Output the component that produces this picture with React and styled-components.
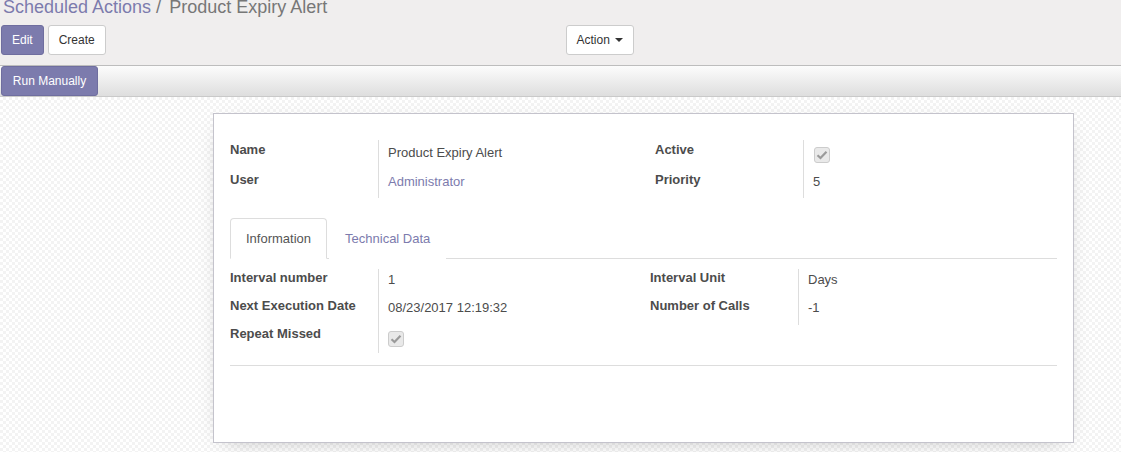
import React from 'react';
import styled, { createGlobalStyle } from 'styled-components';

const GlobalStyle = createGlobalStyle`
  html, body {
    margin: 0;
    padding: 0;
    height: 100%;
    overflow: hidden;
  }
  body {
    font-family: 'Liberation Sans', Arial, sans-serif;
    font-size: 13px;
    color: #4c4c4c;
  }
  #root {
    height: 100%;
  }
`;

const Page = styled.div`
  display: flex;
  flex-direction: column;
  height: 452px;
`;

const ControlPanel = styled.div`
  background: #f0eeee;
  border-bottom: 1px solid #bdbdbd;
  padding: 0 1px 10px;
`;

const Breadcrumb = styled.div`
  font-size: 18px;
  line-height: 18px;
  margin: -2px 0 0 2px;
  height: 16px;
  overflow: visible;
  white-space: nowrap;
`;

const Crumb = styled.span`
  color: #7c7bad;
`;

const CrumbSep = styled.span`
  color: #777;
  margin: 0 8px 0 5px;
`;

const Current = styled.span`
  color: #777;
`;

const CpRow = styled.div`
  display: grid;
  grid-template-columns: 1fr 1fr;
  margin-top: 11px;
`;

const ButtonGroup = styled.div`
  display: flex;
  gap: 4px;
  padding-left: ${p => p.$offset || 0}px;
`;

const Button = styled.button`
  box-sizing: border-box;
  height: 30px;
  min-width: ${p => p.$min || 0}px;
  justify-content: center;
  padding: 0 10px;
  font-family: 'Liberation Sans', Arial, sans-serif;
  font-size: 12px;
  border-radius: 3px;
  display: inline-flex;
  align-items: center;
  gap: 5px;
  cursor: pointer;
  border: 1px solid ${p => (p.$primary ? '#6f6e9f' : '#cccccc')};
  background: ${p => (p.$primary ? '#7c7bad' : '#ffffff')};
  color: ${p => (p.$primary ? '#ffffff' : '#333333')};
`;

const Caret = styled.span`
  width: 0;
  height: 0;
  border-left: 4px solid transparent;
  border-right: 4px solid transparent;
  border-top: 4px solid #333;
`;

const StatusBar = styled.div`
  display: flex;
  padding-left: 1px;
  background: linear-gradient(to bottom, #fcfcfc, #dedede);
  border-bottom: 1px solid #c9c9c9;
`;

const SheetBg = styled.div`
  flex: 1;
  padding: 16px 47px 10px 213px;
  background-color: #ffffff;
  background-image: repeating-conic-gradient(#f3f3f3 0% 25%, #ffffff 0% 50%);
  background-size: 6px 6px;
`;

const Sheet = styled.div`
  box-sizing: border-box;
  height: 330px;
  background: #ffffff;
  border: 1px solid #c4c3cc;
  box-shadow: 0 6px 22px -12px rgba(0, 0, 0, 0.35);
  padding: 26px 16px 0;
`;

const Groups = styled.div`
  display: flex;
`;

const Group = styled.div`
  width: ${p => p.$width}px;
  display: grid;
  grid-template-columns: 149px 1fr;
  grid-auto-rows: ${p => p.$row}px;
  padding-bottom: ${p => p.$bottom || 0}px;
`;

const Label = styled.div`
  font-weight: bold;
  color: #4c4c4c;
  line-height: 18px;
  padding-top: ${p => p.$top || 0}px;
  border-right: 1px solid #dddddd;
  white-space: nowrap;
`;

const Value = styled.div`
  line-height: 18px;
  padding: ${p => p.$top || 0}px 0 0 9px;
  color: ${p => (p.$link ? '#7c7bad' : '#4c4c4c')};
`;

const Check = styled.div`
  box-sizing: border-box;
  width: 16px;
  height: 16px;
  margin: ${p => p.$top}px 0 0 ${p => p.$left}px;
  border: 1px solid #cccccc;
  border-radius: 3px;
  background: #e9e9e9;
  display: flex;
  align-items: center;
  justify-content: center;
`;

const Tabs = styled.div`
  display: flex;
  margin-top: 20px;
  border-bottom: 1px solid #dddddd;
`;

const Tab = styled.div`
  line-height: 20px;
  padding: 10px 15px 9px;
  margin: 0 2px -1px 0;
  border: 1px solid ${p => (p.$active ? '#dddddd' : 'transparent')};
  border-bottom-color: ${p => (p.$active ? '#ffffff' : 'transparent')};
  border-radius: 4px 4px 0 0;
  background: #ffffff;
  color: ${p => (p.$active ? '#555555' : '#7c7bad')};
`;

const TabContent = styled.div`
  padding-top: 10px;
  padding-bottom: 10px;
  border-bottom: 1px solid #dddddd;
`;

const Tick = () => (
  <svg width="12" height="10" viewBox="0 0 12 10">
    <path d="M1.5 5.2 L4.5 8 L10.5 1.8" fill="none" stroke="#9a9a9a" strokeWidth="2.2" />
  </svg>
);

export default function App() {
  return (
    <Page>
      <GlobalStyle />
      <ControlPanel>
        <Breadcrumb>
          <Crumb>Scheduled Actions</Crumb>
          <CrumbSep>/</CrumbSep>
          <Current>Product Expiry Alert</Current>
        </Breadcrumb>
        <CpRow>
          <ButtonGroup>
            <Button $primary>Edit</Button>
            <Button>Create</Button>
          </ButtonGroup>
          <ButtonGroup $offset={5}>
            <Button>
              Action <Caret />
            </Button>
          </ButtonGroup>
        </CpRow>
      </ControlPanel>
      <StatusBar>
        <Button $primary $min={97}>Run Manually</Button>
      </StatusBar>
      <SheetBg>
        <Sheet>
          <Groups>
            <Group $width={425} $row={29}>
              <Label $top={1}>Name</Label>
              <Value $top={4}>Product Expiry Alert</Value>
              <Label $top={2}>User</Label>
              <Value $top={4} $link>Administrator</Value>
            </Group>
            <Group $width={401} $row={29}>
              <Label $top={1}>Active</Label>
              <Value>
                <Check $top={7} $left={1}><Tick /></Check>
              </Value>
              <Label $top={2}>Priority</Label>
              <Value $top={4}>5</Value>
            </Group>
          </Groups>
          <Tabs>
            <Tab $active>Information</Tab>
            <Tab>Technical Data</Tab>
          </Tabs>
          <TabContent>
            <Groups>
              <Group $width={420} $row={28} $bottom={2}>
                <Label>Interval number</Label>
                <Value $top={2}>1</Value>
                <Label>Next Execution Date</Label>
                <Value $top={2}>08/23/2017 12:19:32</Value>
                <Label>Repeat Missed</Label>
                <Value>
                  <Check $top={6} $left={0}><Tick /></Check>
                </Value>
              </Group>
              <Group $width={406} $row={28} $bottom={2}>
                <Label>Interval Unit</Label>
                <Value $top={2}>Days</Value>
                <Label>Number of Calls</Label>
                <Value $top={2}>-1</Value>
              </Group>
            </Groups>
          </TabContent>
        </Sheet>
      </SheetBg>
    </Page>
  );
}
